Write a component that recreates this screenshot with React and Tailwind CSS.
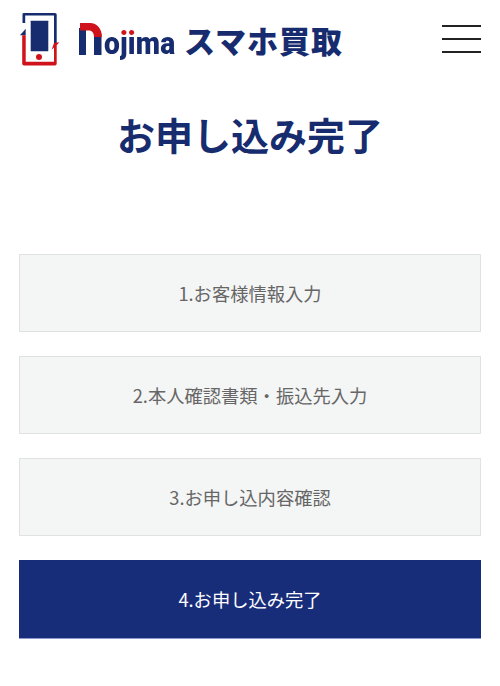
const CJK = "font-['Noto_Sans_CJK_JP','Noto_Sans',sans-serif]";

function LogoMark() {
  return (
    <svg width="42" height="56" viewBox="19 11 42 56" className="shrink-0">
      <path d="M22.5 23 V14 Q22.5 13 24 13 H55 Q56.7 13 56.7 14.5 V43 H54 V15.5 H25.2 V23 Z" fill="#172c6f" />
      <path d="M20 35.3 L25.7 28.7 V35.3 Z" fill="#172c6f" />
      <path d="M22.2 35.3 H25.7 V61.8 H54 V47.5 L51.7 49.7 L54 43 L59.3 42.3 L56.7 45.2 V63.5 Q56.7 65.4 55 65.4 H24 Q22.2 65.4 22.2 63.5 Z" fill="#d0121b" />
      <rect x="30.7" y="20.7" width="17.6" height="30.6" rx="0.5" fill="#172c6f" />
      <circle cx="39" cy="57" r="3" fill="#d0121b" />
    </svg>
  );
}

function Step({ children, active }) {
  return (
    <div
      className={
        active
          ? "h-[79px] mb-[-1px] pt-[1px] flex items-center justify-center bg-[#182d7a] border-b border-b-[#8f9bd0] text-white text-[18.3px]"
          : "h-[78px] pt-[1px] flex items-center justify-center bg-[#f4f5f5] border border-[#e0e2e2] text-[#666666] text-[18.3px]"
      }
    >
      {children}
    </div>
  );
}

export default function App() {
  return (
    <div className={`w-[500px] h-[686px] bg-white overflow-hidden ${CJK}`}>
      <header className="h-[80px] pl-[19px] pr-[19px] pt-[11px] flex items-start justify-between">
        <div className="flex items-start">
          <LogoMark />
          <div className="ml-[18px] mt-[12px] flex items-end h-[32px]">
            <svg width="23" height="32" viewBox="0 0 23 32" className="shrink-0">
              <path d="M0 5 H7 V32 H0 Z" fill="#172c6f" />
              <path d="M1 0 H11 C18 0 23 6 23 14 H15 C15 10 13 7.5 10 7.5 H1 Z" fill="#d0121b" />
              <path d="M15 14 H22.5 V32 H15 Z" fill="#172c6f" />
            </svg>
            <span className="ml-[2px] font-['Roboto',sans-serif] font-black text-[32px] leading-[24px] tracking-[0.2px] text-[#172c6f] scale-x-[0.88] origin-left w-[75px] whitespace-nowrap">
              o
              <span className="bg-[linear-gradient(#d0121b_11.7px,#172c6f_11.7px)] bg-clip-text text-transparent">ji</span>
              ma
            </span>
            <span className="ml-[5px] mb-[-3px] font-black text-[31px] leading-[36px] tracking-[1px] text-[#172c6f] whitespace-nowrap">
              スマホ買取
            </span>
          </div>
        </div>
        <div className="mt-[14px] flex flex-col gap-[11px] w-[39px]">
          <div className="h-[2px] bg-[#222222]" />
          <div className="h-[2px] bg-[#222222]" />
          <div className="h-[2px] bg-[#222222]" />
        </div>
      </header>
      <h1 className="mt-[29px] text-center text-[38px] leading-[50px] font-bold text-[#172c6f]">
        お申し込み完了
      </h1>
      <div className="mt-[95px] mx-[19px] flex flex-col gap-[24px]">
        <Step>1.お客様情報入力</Step>
        <Step>2.本人確認書類・振込先入力</Step>
        <Step>3.お申し込内容確認</Step>
        <Step active>4.お申し込み完了</Step>
      </div>
    </div>
  );
}
